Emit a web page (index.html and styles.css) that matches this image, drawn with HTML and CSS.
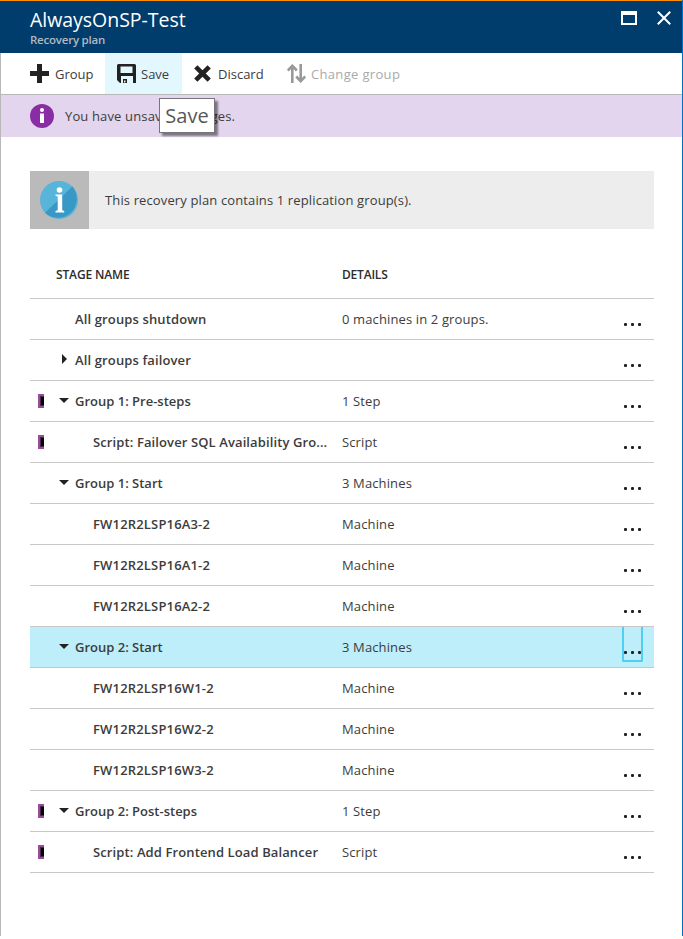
FILE: index.html
```html
<!DOCTYPE html>
<html lang="en">
<head>
<meta charset="utf-8">
<title>AlwaysOnSP-Test - Recovery plan</title>
<link rel="stylesheet" href="styles.css">
</head>
<body>
<div class="blade">
  <header class="titlebar">
    <div class="titles">
      <h1>AlwaysOnSP-Test</h1>
      <p>Recovery plan</p>
    </div>
    <div class="window-actions">
      <svg class="maximize" width="16" height="14" viewBox="0 0 16 14"><path fill="#fff" fill-rule="evenodd" d="M0 0h16v14H0zM2 4v8h12V4z"/></svg>
      <svg class="close" width="14" height="14" viewBox="0 0 14 14"><path stroke="#fff" stroke-width="2" d="M.8.8l12.4 12.4M13.2.8L.8 13.2"/></svg>
    </div>
  </header>

  <nav class="toolbar">
    <div class="command group">
      <svg width="19" height="19" viewBox="0 0 19 19"><path fill="#222" d="M7 0h5v7h7v5h-7v7H7v-7H0V7h7z"/></svg>
      <span>Group</span>
    </div>
    <div class="command save">
      <svg width="19" height="19" viewBox="0 0 19 19"><path fill="#222" fill-rule="evenodd" d="M1.500 0H17.500Q19 0 19 1.500V19H16V12H4V19H3L0 16V1.500Q0 0 1.500 0zM3.500 2.500V9H15.500V2.500zM6 15h4v4H6zM7 16.500v2h1.500v-2z"/></svg>
      <span>Save</span>
      <div class="tooltip">Save</div>
    </div>
    <div class="command discard">
      <svg width="17" height="17" viewBox="0 0 17 17"><path stroke="#222" stroke-width="4.6" d="M1.8 1.8l13.4 13.4M15.2 1.8L1.8 15.2"/></svg>
      <span>Discard</span>
    </div>
    <div class="command change">
      <svg width="19" height="19" viewBox="0 0 19 19"><g fill="none" stroke="#999" stroke-width="2.6"><path d="M5.3 19V2M.8 6.500L5.3 1.8l4.500 4.700M13.700 0v17M9.200 12.500l4.500 4.700 4.500-4.700"/></g></svg>
      <span>Change group</span>
    </div>
  </nav>

  <div class="notice">
    <svg width="24" height="24" viewBox="0 0 24 24"><circle cx="12" cy="12" r="12" fill="#8a2da5"/><circle cx="12" cy="6" r="2" fill="#fff"/><path fill="#fff" d="M10 9.5h4V19h-4z"/></svg>
    <span>You have unsaved changes.</span>
  </div>

  <main>
    <section class="info">
      <div class="info-icon">
        <svg width="38" height="38" viewBox="0 0 38 38"><circle cx="19" cy="19" r="19" fill="#59b4d9"/><path fill="#3999c6" d="M32.4 5.6A19 19 0 0 1 5 31.8z"/><circle cx="19.5" cy="9" r="2.8" fill="#fff"/><path fill="#fff" d="M15.500 13.500h6.700v15.700l2 .8v1.500h-8.700V30l2.200-.8V15.500l-2.200-.7z"/></svg>
      </div>
      <p>This recovery plan contains 1 replication group(s).</p>
    </section>

    <div class="table">
      <div class="row head"><span class="name">STAGE NAME</span><span class="detail">DETAILS</span></div>
      <div class="row"><i class="mark"></i><i class="arrow"></i><span class="name">All groups shutdown</span><span class="detail">0 machines in 2 groups.</span><span class="more"><b></b><b></b><b></b></span></div>
      <div class="row"><i class="mark"></i><i class="arrow closed"></i><span class="name">All groups failover</span><span class="detail"></span><span class="more"><b></b><b></b><b></b></span></div>
      <div class="row"><i class="mark changed"></i><i class="arrow open"></i><span class="name parent">Group 1: Pre-steps</span><span class="detail">1 Step</span><span class="more"><b></b><b></b><b></b></span></div>
      <div class="row"><i class="mark changed"></i><i class="arrow"></i><span class="name child">Script: Failover SQL Availability Gro...</span><span class="detail">Script</span><span class="more"><b></b><b></b><b></b></span></div>
      <div class="row"><i class="mark"></i><i class="arrow open"></i><span class="name parent">Group 1: Start</span><span class="detail">3 Machines</span><span class="more"><b></b><b></b><b></b></span></div>
      <div class="row"><i class="mark"></i><i class="arrow"></i><span class="name child host">FW12R2LSP16A3-2</span><span class="detail">Machine</span><span class="more"><b></b><b></b><b></b></span></div>
      <div class="row"><i class="mark"></i><i class="arrow"></i><span class="name child host">FW12R2LSP16A1-2</span><span class="detail">Machine</span><span class="more"><b></b><b></b><b></b></span></div>
      <div class="row"><i class="mark"></i><i class="arrow"></i><span class="name child host">FW12R2LSP16A2-2</span><span class="detail">Machine</span><span class="more"><b></b><b></b><b></b></span></div>
      <div class="row selected"><i class="mark"></i><i class="arrow open"></i><span class="name parent">Group 2: Start</span><span class="detail">3 Machines</span><span class="more"><b></b><b></b><b></b></span></div>
      <div class="row"><i class="mark"></i><i class="arrow"></i><span class="name child host">FW12R2LSP16W1-2</span><span class="detail">Machine</span><span class="more"><b></b><b></b><b></b></span></div>
      <div class="row"><i class="mark"></i><i class="arrow"></i><span class="name child host">FW12R2LSP16W2-2</span><span class="detail">Machine</span><span class="more"><b></b><b></b><b></b></span></div>
      <div class="row"><i class="mark"></i><i class="arrow"></i><span class="name child host">FW12R2LSP16W3-2</span><span class="detail">Machine</span><span class="more"><b></b><b></b><b></b></span></div>
      <div class="row"><i class="mark changed"></i><i class="arrow open"></i><span class="name parent">Group 2: Post-steps</span><span class="detail">1 Step</span><span class="more"><b></b><b></b><b></b></span></div>
      <div class="row"><i class="mark changed"></i><i class="arrow"></i><span class="name child">Script: Add Frontend Load Balancer</span><span class="detail">Script</span><span class="more"><b></b><b></b><b></b></span></div>
    </div>
  </main>
</div>
</body>
</html>
```
FILE: styles.css
```css
* { box-sizing: border-box; }
body { margin: 0; background: #fff; color: #3c3c3c; font: 13px/20px "Open Sans", "Noto Sans", sans-serif; }
h1, p { margin: 0; font-weight: 400; }
svg { display: block; flex: none; }
.blade { height: 936px; border-left: 1px solid #b8b8b8; border-right: 1px solid #0072c6; }

.titlebar { display: flex; justify-content: space-between; height: 53px; margin-left: -1px; padding: 6px 11px 0 30px; background: #003c6c; border-top: 1px solid #ff8c00; }
.titles h1 { color: #fff; font-size: 19.5px; line-height: 26px; letter-spacing: -.03px; }
.titles p { color: #b3b9c0; font-size: 11.5px; line-height: 14px; font-weight: 600; letter-spacing: -.22px; }
.window-actions { display: flex; gap: 20px; padding-top: 4px; }

.toolbar { display: flex; height: 42px; border-bottom: 1px solid #b8b8b8; }
.command { display: flex; align-items: center; white-space: nowrap; }
.group { width: 104px; padding-left: 29px; gap: 6px; }
.save { position: relative; width: 77px; padding-left: 12px; gap: 5px; background: #e3f7fe; }
.discard { width: 105px; padding-left: 12px; gap: 7px; }
.change { gap: 5px; color: #aaa; letter-spacing: .33px; }
.tooltip { position: absolute; left: 54px; top: 45px; width: 56px; height: 35px; border: 1px solid #767676; background: #fff; color: #575757; font-size: 20px; line-height: 34px; text-align: center; box-shadow: 3px 3px 2px rgba(0,0,0,.45); z-index: 1; }

.notice { display: flex; align-items: center; gap: 11px; height: 42px; padding-left: 29px; background: #e4d5ee; letter-spacing: .14px; }

main { padding: 34px 28px 0 29px; }
.info { display: flex; align-items: center; height: 58px; background: #ededed; letter-spacing: .13px; }
.info-icon { display: flex; align-items: center; width: 59px; height: 58px; margin-right: 16px; padding-left: 10px; background: #bababa; }

.table { margin-top: 21px; }
.row { display: flex; align-items: center; height: 41px; border-bottom: 1px solid #c8c8c8; white-space: nowrap; }
.mark { width: 6px; height: 14px; margin: 0 15px 0 8px; }
.changed { border: 2px solid #984c9c; border-right: 0; background: #000; box-shadow: inset 1px 1px #4c264e, inset 0 -1px #4c264e; }
.arrow { width: 16px; display: flex; }
.open::before { content: ""; border: 5px solid transparent; border-top-color: #222; border-bottom: 0; margin-bottom: 2px; }
.closed::before { content: ""; margin: 0 0 3px 3px; border: 5px solid transparent; border-left-color: #222; border-right: 0; }
.name { width: 267px; font-weight: 600; letter-spacing: .13px; }
.parent { letter-spacing: 0; }
.child { padding-left: 18px; letter-spacing: .11px; }
.host { letter-spacing: .17px; }
.detail { flex: 1; letter-spacing: .13px; }
.head { height: 49px; padding: 2px 0 0 26px; font-size: 12px; font-weight: 600; color: #2c2c2c; }
.head .name { width: 286px; letter-spacing: -.13px; }
.head .detail { letter-spacing: -.2px; }
.more { align-self: flex-start; display: flex; align-items: flex-end; justify-content: space-between; width: 21px; height: 35px; margin-right: 11px; padding: 0 2px 8px; }
.more b { width: 3px; height: 3px; border-radius: 1px; background: #222; }
.selected { background: #bdeefa; }
.selected .more { border: 2px solid #4dd0f4; border-top: 0; border-radius: 0 0 2px 2px; padding: 0 0 6px; }
```
